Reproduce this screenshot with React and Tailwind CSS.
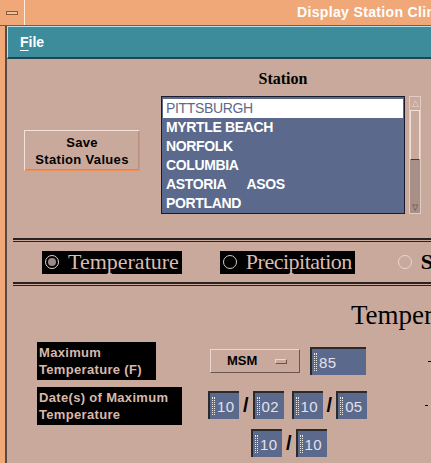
import React from 'react'

const stations = ['PITTSBURGH', 'MYRTLE BEACH', 'NORFOLK', 'COLUMBIA', 'ASTORIA      ASOS', 'PORTLAND']

function Field({ value, w = 'w-[31px]' }) {
  return (
    <div className={`${w} h-[28px] bg-[#5b6a8c] border-t-2 border-l-2 border-[#2a2a2a] flex items-center pl-[2px]`}>
      <span className="w-[3px] h-[18px] border-x border-dotted border-[#e8e8e8] mr-[2px]" />
      <span className="text-[15px] leading-none text-[#e4e0ec] font-light tracking-wide">{value}</span>
    </div>
  )
}

function Slash() {
  return <span className="text-[20px] font-bold text-black leading-none mx-[4px]">/</span>
}

function Radio({ label, checked, boxed, tight }) {
  return (
    <div className={`flex items-center h-[23px] pl-[3px] pr-[3px] ${boxed ? 'bg-black text-[#dcbcb0]' : 'text-black font-bold'}`}>
      <span className={`w-[14px] h-[14px] rounded-full border ${checked ? 'border-[#e8d0c8]' : boxed ? 'border-[#d8c8c0]' : 'border-[#e8d8d0]'} flex items-center justify-center mr-[9px]`}>
        {checked && <span className="w-[8px] h-[8px] rounded-full bg-[#9a8a88]" />}
      </span>
      <span className={`text-[22px] leading-none ${tight ? 'tracking-[-0.5px]' : ''}`}>{label}</span>
    </div>
  )
}

export default function App() {
  return (
    <div className="w-[431px] h-[463px] overflow-hidden bg-[#c9a99b] flex flex-col" style={{ fontFamily: '"Liberation Sans", Arial, sans-serif' }}>
      {/* window title */}
      <div className="h-[26px] bg-[#f0a878] flex border-b border-[#7a5a48] shrink-0">
        <div className="w-[25px] border-r border-[#fff0e0] flex items-center justify-center">
          <span className="w-[12px] h-[4px] border border-[#8a5a40] bg-[#f4c098]" />
        </div>
        <div className="flex-1 flex items-center pl-[272px] text-white font-bold text-[14px] whitespace-nowrap tracking-wide overflow-hidden">
          Display Station Climatology
        </div>
      </div>

      <div className="flex flex-1">
        {/* left frame */}
        <div className="w-[5px] bg-[#f0a878] shrink-0" />
        <div className="w-[2px] bg-[#5a4a44] shrink-0" />

        <div className="flex-1 flex flex-col min-w-0">
          {/* menu bar */}
          <div className="h-[33px] bg-[#3c8c9c] border-t border-l border-[#b8e0e8] border-b-2 border-b-[#1e4650] flex items-center pl-[12px] shrink-0">
            <span className="text-white font-bold text-[14px]"><span className="underline underline-offset-[3px]">F</span>ile</span>
          </div>

          <div className="flex-1 flex flex-col" style={{ fontFamily: '"Liberation Serif", "Times New Roman", serif' }}>
            {/* station section */}
            <div className="flex items-start pl-[17px] h-[179px] shrink-0" style={{ fontFamily: '"Liberation Sans", Arial, sans-serif' }}>
              <button className="mt-[71px] w-[116px] h-[41px] border border-t-[#f4e2d8] border-l-[#f4e2d8] border-b-[#f09058] border-r-[#f09058] shadow-[inset_-1px_-1px_0_#b89080] bg-[#c9a99b] text-black font-bold text-[13px] leading-[17px] tracking-wide">
                Save<br />Station Values
              </button>
              <div className="ml-[21px] flex flex-col">
                <div className="w-[244px] text-center font-bold text-[16px] h-[20px] leading-[20px] mt-[10px] mb-[7px] text-black" style={{ fontFamily: '"Liberation Serif", serif' }}>
                  Station
                </div>
                <div className="flex">
                  <div className="w-[244px] h-[118px] bg-[#5b6a8c] border border-[#1a1a2a] px-[1px] pt-[2px]">
                    {stations.map((s, i) => (
                      <div key={s} className={`h-[19px] pl-[3px] flex items-center text-[14px] font-bold whitespace-pre tracking-tight ${i === 0 ? 'bg-white text-[#5b6a8c] font-normal' : 'text-white'}`}>
                        {s}
                      </div>
                    ))}
                  </div>
                  <div className="ml-[4px] w-[12px] h-[118px] border border-[#e0ccc0] flex flex-col">
                    <div className="h-[13px] flex items-center justify-center text-[9px] text-[#e8d8d0] leading-none">△</div>
                    <div className="h-[50px] border border-[#f0e0d8] border-b-[#4a3a34]" />
                    <div className="flex-1 bg-[#a89088]" />
                    <div className="h-[10px] flex items-center justify-center text-[8px] text-[#4a3a34] bg-[#a89088] leading-none">▽</div>
                  </div>
                </div>
              </div>
            </div>

            {/* radio group */}
            <div className="ml-[6px] border-t-2 border-[#2a2220] pt-[1px] shrink-0">
              <div className="border-t border-[#2a2220]" />
              <div className="h-[40px] flex items-center pl-[29px] overflow-hidden whitespace-nowrap">
                <Radio label="Temperature" checked boxed />
                <div className="w-[38px] shrink-0" />
                <Radio label="Precipitation" boxed tight />
                <div className="w-[40px] shrink-0" />
                <Radio label="Snow" />
              </div>
              <div className="border-t-2 border-[#2a2220]" />
              <div className="border-t border-[#2a2220] mt-[1px]" />
            </div>

            {/* temperature section */}
            <div className="flex-1 overflow-hidden">
              <div className="pl-[344px] mt-[16px] text-[27px] leading-none text-black whitespace-nowrap">Temperature</div>
              <div className="flex items-center mt-[13px] pl-[30px]" style={{ fontFamily: '"Liberation Sans", Arial, sans-serif' }}>
                <div className="w-[119px] h-[38px] bg-black text-[#d8b8aa] font-bold text-[13px] leading-[17px] px-[2px] pt-[2px] tracking-wide">
                  Maximum<br />Temperature (F)
                </div>
                <div className="ml-[54px] w-[90px] h-[24px] border border-t-[#ead6cc] border-l-[#ead6cc] border-b-[#6a5450] border-r-[#6a5450] flex items-center pl-[16px]">
                  <span className="font-bold text-[13px] text-black">MSM</span>
                  <span className="ml-[18px] w-[12px] h-[5px] border border-t-[#ead6cc] border-l-[#ead6cc] border-b-[#6a5450] border-r-[#6a5450]" />
                </div>
                <div className="ml-[10px]"><Field value="85" w="w-[56px]" /></div>
                <span className="ml-[62px] w-[3px] h-[1px] bg-black" />
              </div>
              <div className="flex items-start mt-[7px] pl-[30px]" style={{ fontFamily: '"Liberation Sans", Arial, sans-serif' }}>
                <div className="w-[145px] h-[38px] bg-black text-[#d8b8aa] font-bold text-[13px] leading-[17px] px-[2px] pt-[2px] tracking-wide">
                  Date(s) of Maximum<br />Temperature
                </div>
                <div className="flex flex-col ml-[26px] mt-[4px]">
                  <div className="flex items-center">
                    <Field value="10" />
                    <Slash />
                    <Field value="02" />
                    <div className="w-[8px]" />
                    <Field value="10" />
                    <Slash />
                    <Field value="05" />
                    <span className="ml-[58px] w-[3px] h-[1px] bg-black" />
                  </div>
                  <div className="flex items-center mt-[10px] ml-[43px]">
                    <Field value="10" />
                    <Slash />
                    <Field value="10" />
                  </div>
                </div>
              </div>
            </div>
          </div>
        </div>
      </div>
    </div>
  )
}
